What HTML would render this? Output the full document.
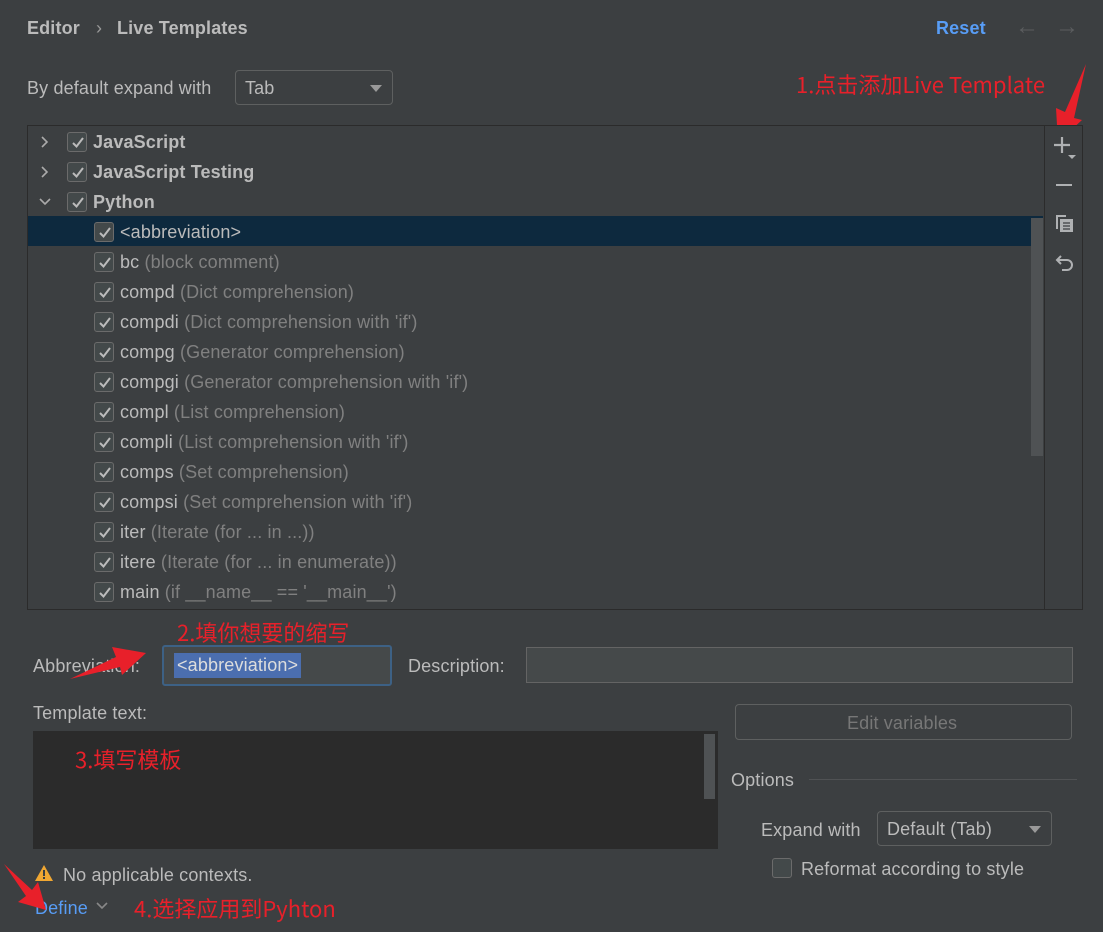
<!DOCTYPE html>
<html><head><meta charset="utf-8"><style>
*{margin:0;padding:0;box-sizing:border-box}
body{width:1103px;height:932px;background:#3c3f41;font-family:"Liberation Sans","Noto Sans CJK SC",sans-serif;color:#bbbbbb;position:relative;overflow:hidden;font-size:18px;letter-spacing:0.15px}
.a{position:absolute;white-space:nowrap}
.cb{position:absolute;width:20px;height:20px;border:1px solid #6b6b6b;border-radius:3px;background:#43494a}
.cb svg{position:absolute;left:2px;top:2px}
.row{position:absolute;left:28px;width:1015px;height:30px}
.g{color:#808080}
.red{color:#e8202a;font-family:"Noto Sans CJK SC",sans-serif;font-size:22px;letter-spacing:0}
.b{font-weight:bold}
</style></head><body>
<div class="a b" style="left:27px;top:18px;font-size:18px;color:#bbb">Editor</div>
<div class="a" style="left:96px;top:18px;color:#999">›</div>
<div class="a b" style="left:117px;top:18px;font-size:18px">Live Templates</div>
<div class="a b" style="left:936px;top:18px;color:#589df6">Reset</div>
<div class="a" style="left:1015px;top:13px;color:#5b5d5f;font-size:24px">←</div>
<div class="a" style="left:1055px;top:13px;color:#5b5d5f;font-size:24px">→</div>

<div class="a" style="left:27px;top:78px">By default expand with</div>
<div class="a" style="left:235px;top:70px;width:158px;height:35px;border:1px solid #5e6060;border-radius:4px;background:#3c3f41"><span style="position:absolute;left:9px;top:7px">Tab</span><span style="position:absolute;right:10px;top:14px;border-left:6px solid transparent;border-right:6px solid transparent;border-top:7px solid #999"></span></div>
<div class="a red" style="left:796px;top:68px">1.点击添加Live Template</div>
<svg class="a" style="left:1050px;top:60px" width="40" height="85"><polygon points="36,4 24,58 32,60 8,82 6,48 15,52" fill="#e8202a"/></svg>

<div class="a" style="left:27px;top:125px;width:1056px;height:485px;border:1px solid #2b2b2b;background:#3c3f41"></div>
<div class="a" style="left:1044px;top:126px;width:1px;height:483px;background:#2b2b2b"></div>
<div class="row" style="top:216px;background:#0d293e"></div>
<div class="a" style="left:1031px;top:218px;width:12px;height:238px;background:#4f5254"></div>

<div id="list"></div>

<!-- toolbar -->
<svg class="a" style="left:1054px;top:136px" width="24" height="24"><path d="M8 1v16M0 9h16" stroke="#afb1b3" stroke-width="2.2"/><path d="M14 19h8l-4 4z" fill="#afb1b3"/></svg>
<div class="a" style="left:1056px;top:184px;width:16px;height:2px;background:#afb1b3"></div>
<svg class="a" style="left:1054px;top:213px" width="20" height="20"><path d="M2 2h10v2H4v12H2z" fill="#afb1b3"/><rect x="6" y="6" width="13" height="13" fill="#afb1b3"/><path d="M9 10h7M9 13h7M9 16h7" stroke="#3c3f41" stroke-width="1.3"/></svg>
<svg class="a" style="left:1054px;top:252px" width="22" height="22"><path d="M7 4L3 8l4 4" fill="none" stroke="#afb1b3" stroke-width="2"/><path d="M3 8h10a5 5 0 0 1 0 10H8" fill="none" stroke="#afb1b3" stroke-width="2"/></svg>

<!-- bottom -->
<div class="a" style="left:33px;top:656px">Abbreviation:</div>
<svg class="a" style="left:68px;top:645px" width="90" height="40"><polygon points="2,34 52,22 54,30 78,8 44,2 48,12" fill="#e8202a"/></svg>
<div class="a red" style="left:177px;top:616px">2.填你想要的缩写</div>
<div class="a" style="left:162px;top:645px;width:230px;height:41px;border:2px solid #3d6185;border-radius:3px;background:#45494a"><span style="position:absolute;left:10px;top:6px;background:#4b6eaf;color:#ddd;padding:2px 3px">&lt;abbreviation&gt;</span></div>
<div class="a" style="left:408px;top:656px">Description:</div>
<div class="a" style="left:526px;top:647px;width:547px;height:36px;border:1px solid #646464;background:#45494a"></div>

<div class="a" style="left:33px;top:703px">Template text:</div>
<div class="a" style="left:33px;top:731px;width:685px;height:118px;background:#2b2b2b"></div>
<div class="a" style="left:704px;top:734px;width:11px;height:65px;background:#4f5254"></div>
<div class="a red" style="left:75px;top:743px">3.填写模板</div>

<div class="a" style="left:735px;top:704px;width:337px;height:36px;border:1px solid #5e6060;border-radius:4px;color:#777"><span style="position:absolute;left:111px;top:8px">Edit variables</span></div>
<div class="a" style="left:731px;top:770px">Options</div>
<div class="a" style="left:809px;top:779px;width:268px;height:1px;background:#505254"></div>
<div class="a" style="left:761px;top:820px">Expand with</div>
<div class="a" style="left:877px;top:811px;width:175px;height:35px;border:1px solid #5e6060;border-radius:4px"><span style="position:absolute;left:9px;top:7px">Default (Tab)</span><span style="position:absolute;right:10px;top:14px;border-left:6px solid transparent;border-right:6px solid transparent;border-top:7px solid #999"></span></div>
<div class="cb" style="left:772px;top:858px;background:#43494a"></div>
<div class="a" style="left:801px;top:859px">Reformat according to style</div>

<svg class="a" style="left:34px;top:864px" width="20" height="18"><polygon points="10,1 19,17 1,17" fill="#f0a732"/><rect x="9" y="6" width="2" height="6" fill="#3c3f41"/><rect x="9" y="13" width="2" height="2" fill="#3c3f41"/></svg>
<div class="a" style="left:63px;top:865px">No applicable contexts.</div>
<div class="a" style="left:35px;top:898px;color:#589df6">Define</div>
<svg class="a" style="left:96px;top:901px" width="12" height="10"><path d="M1 2l5 5 5-5" fill="none" stroke="#888" stroke-width="1.6"/></svg>
<svg class="a" style="left:2px;top:862px" width="50" height="50"><polygon points="2,2 30,28 36,20 44,48 16,40 24,34" fill="#e8202a"/></svg>
<div class="a red" style="left:134px;top:892px">4.选择应用到Pyhton</div>

<script>
var rows=[[0,'JavaScript','',1],[0,'JavaScript Testing','',1],[2,'Python','',1],
[1,'<abbreviation>',''],[1,'bc','(block comment)'],[1,'compd','(Dict comprehension)'],[1,'compdi',"(Dict comprehension with 'if')"],
[1,'compg','(Generator comprehension)'],[1,'compgi',"(Generator comprehension with 'if')"],[1,'compl','(List comprehension)'],
[1,'compli',"(List comprehension with 'if')"],[1,'comps','(Set comprehension)'],[1,'compsi',"(Set comprehension with 'if')"],
[1,'iter','(Iterate (for ... in ...))'],[1,'itere','(Iterate (for ... in enumerate))'],[1,'main',"(if __name__ == '__main__')"]];
var h='',ck='<svg width="16" height="16"><path d="M3 8l3.5 3.5L13 3" fill="none" stroke="#bbb" stroke-width="2"/></svg>';
function esc(s){return s.replace(/</g,'&lt;').replace(/>/g,'&gt;')}
rows.forEach(function(r,i){var y=127+30*i;
if(r[0]!=1){var arr=r[0]==0?'<path d="M4 2l5 5-5 5" fill="none" stroke="#aaa" stroke-width="1.6"/>':'<path d="M2 4l5 5 5-5" fill="none" stroke="#aaa" stroke-width="1.6"/>';
h+='<svg class="a" style="left:38px;top:'+(y+8)+'px" width="14" height="14">'+arr+'</svg>';
h+='<div class="cb" style="left:67px;top:'+(y+5)+'px">'+ck+'</div>';
h+='<div class="a b" style="left:93px;top:'+(y+5)+'px">'+r[1]+'</div>';}
else{h+='<div class="cb" style="left:94px;top:'+(y+5)+'px">'+ck+'</div>';
h+='<div class="a" style="left:120px;top:'+(y+5)+'px">'+esc(r[1])+(r[2]?' <span class="g">'+r[2]+'</span>':'')+'</div>';}});
document.getElementById('list').outerHTML=h;
</script>
</body></html>
